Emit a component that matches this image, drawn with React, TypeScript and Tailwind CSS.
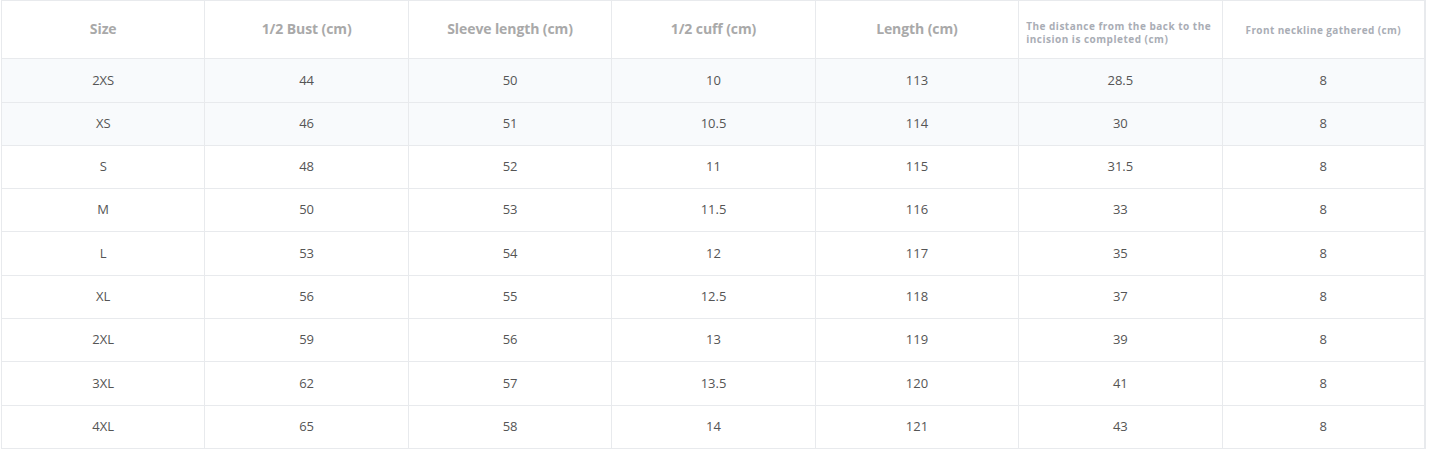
import React from 'react';

const heads = ['Size', '1/2 Bust (cm)', 'Sleeve length (cm)', '1/2 cuff (cm)', 'Length (cm)'];

const rows: string[][] = [
    ['2XS', '44', '50', '10', '113', '28.5', '8'],
    ['XS', '46', '51', '10.5', '114', '30', '8'],
    ['S', '48', '52', '11', '115', '31.5', '8'],
    ['M', '50', '53', '11.5', '116', '33', '8'],
    ['L', '53', '54', '12', '117', '35', '8'],
    ['XL', '56', '55', '12.5', '118', '37', '8'],
    ['2XL', '59', '56', '13', '119', '39', '8'],
    ['3XL', '62', '57', '13.5', '120', '41', '8'],
    ['4XL', '65', '58', '14', '121', '43', '8'],
];

const heights = ['h-[44px]', 'h-[43px]', 'h-[43px]', 'h-[43px]', 'h-[44px]', 'h-[43px]', 'h-[43px]', 'h-[44px]', 'h-[43px]'];

export default function App() {
    return (
        <div className="bg-white w-[1429px] h-[449px] pl-px" style={{ fontFamily: '"Open Sans", "Liberation Sans", sans-serif' }}>
            <div className="w-[1425px] border-t border-l border-[#e8eaed] grid grid-cols-7">
                {heads.map((h) => (
                    <div key={h} className="h-[58px] border-r border-b border-[#e8eaed] flex items-center justify-center pb-[2px] text-[14px] font-bold tracking-[-0.1px] text-[#a9a9a9]">
                        {h}
                    </div>
                ))}
                <div className="h-[58px] border-r border-b border-[#e8eaed] flex items-center px-[7px] pt-[6px] text-[10px] leading-[13px] font-bold tracking-[0.5px] text-[#a9adb5]">
                    The distance from the back to the incision is completed (cm)
                </div>
                <div className="h-[58px] border-r-2 border-b border-[#e8eaed] flex items-center justify-center pt-[2px] text-[10px] font-bold tracking-[0.4px] text-[#a9adb5]">
                    Front neckline gathered (cm)
                </div>
                {rows.map((r, i) =>
                    r.map((c, j) => (
                        <div
                            key={i + '-' + j}
                            className={`${heights[i]} ${j === 6 ? 'border-r-2' : 'border-r'} border-b border-[#e8eaed] flex items-center justify-center text-[13px] text-[#555] ${i < 2 ? 'bg-[#f8fafc]' : 'bg-white'}`}
                        >
                            {c}
                        </div>
                    ))
                )}
            </div>
        </div>
    );
}
